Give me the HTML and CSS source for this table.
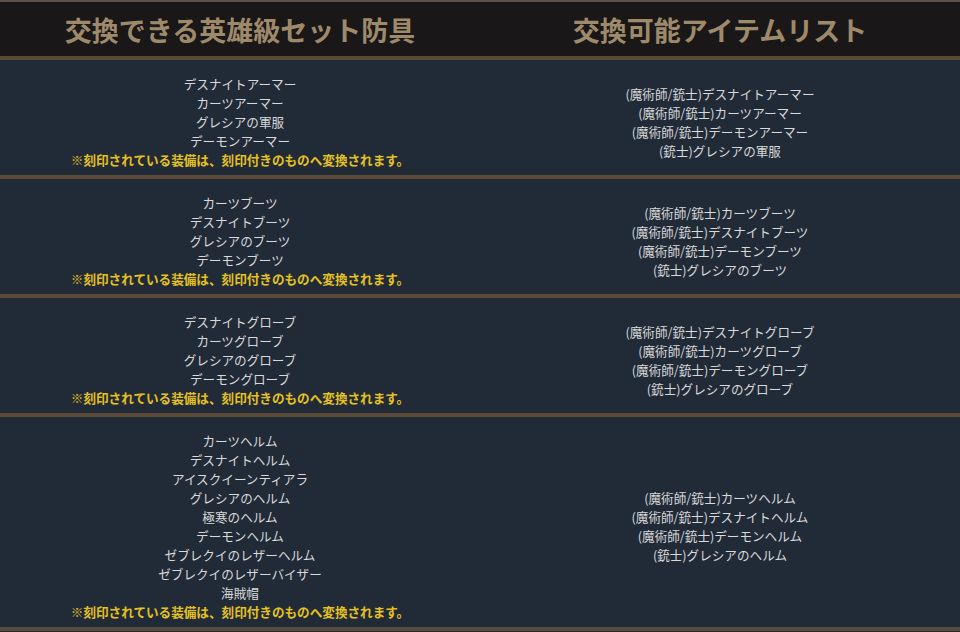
FILE: index.html
```html
<!DOCTYPE html>
<html lang="ja">
<head>
<meta charset="utf-8">
<link rel="stylesheet" href="styles.css">
</head>
<body>
<table class="exchange">
  <thead>
    <tr>
      <th>交換できる英雄級セット防具</th>
      <th>交換可能アイテムリスト</th>
    </tr>
  </thead>
  <tbody>
    <tr>
      <td>デスナイトアーマー<br>カーツアーマー<br>グレシアの軍服<br>デーモンアーマー<br><span class="note">※刻印されている装備は、刻印付きのものへ変換されます。</span></td>
      <td>(魔術師/銃士)デスナイトアーマー<br>(魔術師/銃士)カーツアーマー<br>(魔術師/銃士)デーモンアーマー<br>(銃士)グレシアの軍服</td>
    </tr>
    <tr>
      <td>カーツブーツ<br>デスナイトブーツ<br>グレシアのブーツ<br>デーモンブーツ<br><span class="note">※刻印されている装備は、刻印付きのものへ変換されます。</span></td>
      <td>(魔術師/銃士)カーツブーツ<br>(魔術師/銃士)デスナイトブーツ<br>(魔術師/銃士)デーモンブーツ<br>(銃士)グレシアのブーツ</td>
    </tr>
    <tr>
      <td>デスナイトグローブ<br>カーツグローブ<br>グレシアのグローブ<br>デーモングローブ<br><span class="note">※刻印されている装備は、刻印付きのものへ変換されます。</span></td>
      <td>(魔術師/銃士)デスナイトグローブ<br>(魔術師/銃士)カーツグローブ<br>(魔術師/銃士)デーモングローブ<br>(銃士)グレシアのグローブ</td>
    </tr>
    <tr>
      <td>カーツヘルム<br>デスナイトヘルム<br>アイスクイーンティアラ<br>グレシアのヘルム<br>極寒のヘルム<br>デーモンヘルム<br>ゼブレクイのレザーヘルム<br>ゼブレクイのレザーバイザー<br>海賊帽<br><span class="note">※刻印されている装備は、刻印付きのものへ変換されます。</span></td>
      <td>(魔術師/銃士)カーツヘルム<br>(魔術師/銃士)デスナイトヘルム<br>(魔術師/銃士)デーモンヘルム<br>(銃士)グレシアのヘルム</td>
    </tr>
  </tbody>
</table>
</body>
</html>
```

FILE: styles.css
```css
html, body {
  margin: 0;
  padding: 0;
  background: #212b38;
}
.exchange {
  width: 960px;
  border-collapse: collapse;
  table-layout: fixed;
  font-family: "Noto Sans CJK JP", "Noto Sans", sans-serif;
  border-top: 2px solid #5a5046;
}
.exchange th {
  background: #191717;
  color: #9e8a6a;
  font-size: 27px;
  font-weight: 700;
  height: 57px;
  padding: 14px 0 0;
  box-sizing: border-box;
  border-bottom: 4px solid #5b4a37;
  line-height: 1;
  vertical-align: top;
}
.exchange td {
  background: #212b38;
  color: #d9d9d9;
  font-size: 12.6px;
  line-height: 19px;
  text-align: center;
  vertical-align: middle;
  padding: 14px 0 6px;
  border-bottom: 4px solid #5b4a37;
}
.note {
  color: #e6c21f;
  font-weight: 700;
}
```
